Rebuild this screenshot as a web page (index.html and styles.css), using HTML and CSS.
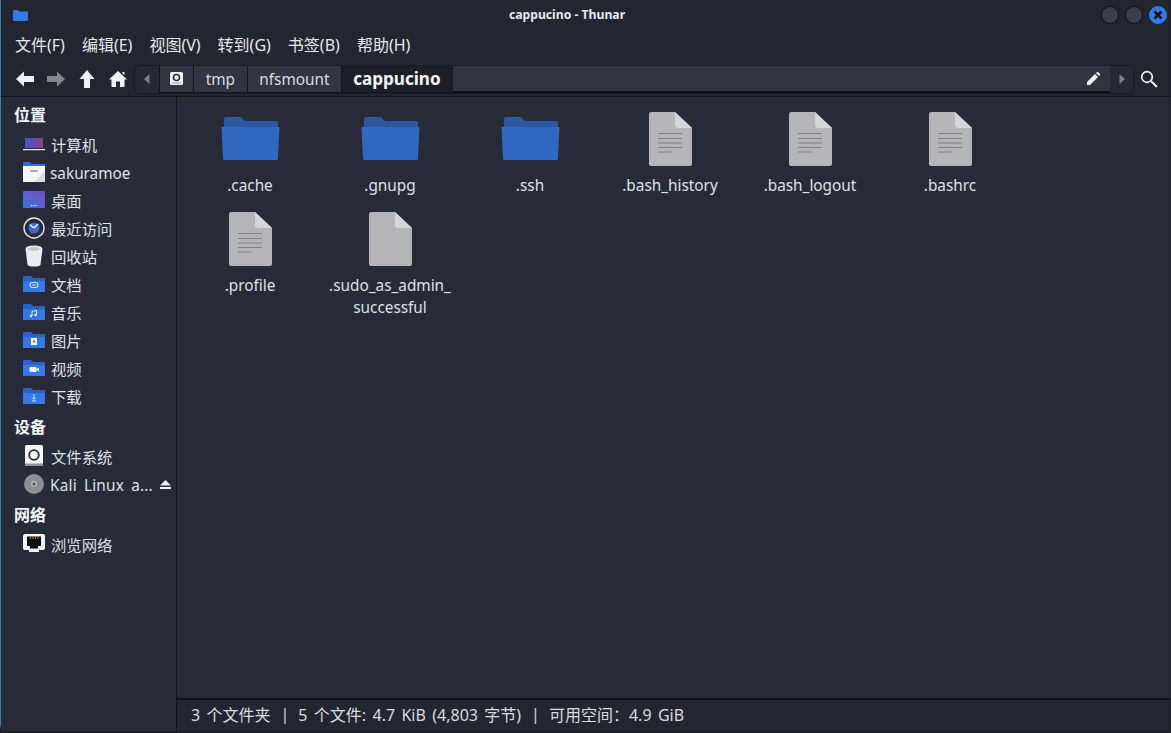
FILE: index.html
```html
<!DOCTYPE html>
<html lang="zh">
<head>
<meta charset="utf-8">
<title>cappucino - Thunar</title>
<link rel="stylesheet" href="styles.css">
</head>
<body>
<svg class="defs" width="0" height="0" aria-hidden="true">
  <defs>
    <linearGradient id="lap" x1="0" y1="0" x2="1" y2="0"><stop offset="0" stop-color="#3f56c8"/><stop offset="1" stop-color="#8a3f8c"/></linearGradient>
    <linearGradient id="desk" x1="0" y1="1" x2="1" y2="0"><stop offset="0" stop-color="#3b75e8"/><stop offset="1" stop-color="#7a4cb4"/></linearGradient>
    <symbol id="sf" viewBox="0 0 22 16"><path d="M0 1.200Q0 0 1.200 0H8L10 2H21Q22 2 22 3V15Q22 16 21 16H1Q0 16 0 15Z" fill="#2a62c8"/><path d="M0 5H22V15Q22 16 21 16H1Q0 16 0 15Z" fill="#3378e6"/></symbol>
    <symbol id="bigfolder" viewBox="0 0 64 64"><path d="M6 12Q6 10 8 10H22Q24 10 25 12L27 14H58Q60 14 60 16V30H6Z" fill="#2c589f"/><path d="M3.500 20H61.500L60 51.500Q60 53 58.500 53H6.500Q5 53 5 51.500Z" fill="#3067c0"/></symbol>
    <symbol id="doc" viewBox="0 0 64 64"><path d="M13 5H37L54 21V57Q54 59 52 59H13Q11 59 11 57V7Q11 5 13 5Z" fill="#b5b5b7"/><path d="M37 5L54 21H40Q37 21 37 18Z" fill="#d6d6d8"/></symbol>
  </defs>
</svg>
<div class="window">
  <header class="titlebar">
    <svg class="title-icon" width="15" height="11" viewBox="0 0 15 11"><path d="M0 1Q0 0 1 0H5L6.500 1.500H14Q15 1.500 15 2.500V10Q15 11 14 11H1Q0 11 0 10Z" fill="#2f79ea"/></svg>
    <span class="title">cappucino - Thunar</span>
    <div class="win-buttons">
      <span class="win-btn"></span>
      <span class="win-btn"></span>
      <span class="win-btn close"><svg width="10" height="10" viewBox="0 0 10 10"><path d="M1.500 1.500L8.500 8.500M8.500 1.500L1.500 8.500" stroke="#10131a" stroke-width="2.600" fill="none"/></svg></span>
    </div>
  </header>
  <nav class="menubar">
    <span class="menu">文件(F)</span><span class="menu">编辑(E)</span><span class="menu">视图(V)</span><span class="menu">转到(G)</span><span class="menu">书签(B)</span><span class="menu">帮助(H)</span>
  </nav>
  <div class="toolbar">
    <div class="nav-icons">
      <svg class="nav-icon" viewBox="0 0 20 16"><path d="M9 0.500V5H19V11H9V15.500L1 8Z" fill="#f1f2f3"/></svg>
      <svg class="nav-icon" viewBox="0 0 20 16"><path d="M11 0.500V5H1V11H11V15.500L19 8Z" fill="#85878b"/></svg>
      <svg class="nav-icon" viewBox="0 0 20 20"><path d="M10 1L17.500 10H13V19H7V10H2.500Z" fill="#f1f2f3"/></svg>
      <svg class="nav-icon" viewBox="0 0 20 20"><path d="M10 2L19 10.500H16.500V18H12V12.500H8V18H3.500V10.500H1ZM14.500 3H16.500V6L14.500 4.500Z" fill="#f1f2f3"/></svg>
    </div>
    <div class="pathbar">
      <span class="arrow-btn"><svg width="6" height="10" viewBox="0 0 6 10"><path d="M5.500 0V10L0 5Z" fill="#7c7f86"/></svg></span>
      <span class="crumb crumb-icon"><svg width="13" height="13" viewBox="0 0 13 13"><rect width="13" height="13" rx="1.500" fill="#f1f2f3"/><circle cx="6.500" cy="5.500" r="3" fill="none" stroke="#2b2e39" stroke-width="1.600"/><rect x="2" y="10.500" width="9" height="1" fill="#9a9ca2"/></svg></span>
      <span class="crumb crumb-tmp">tmp</span>
      <span class="crumb crumb-nfs">nfsmount</span>
      <span class="crumb crumb-active">cappucino</span>
      <span class="entry"><svg width="13" height="13" viewBox="0 0 13 13"><path d="M0 13V10L8 2L11 5L3 13ZM9 1L10 0H11L13 2V3L12 4Z" fill="#f1f2f3"/></svg></span>
      <span class="arrow-btn arrow-right"><svg width="6" height="10" viewBox="0 0 6 10"><path d="M0.500 0V10L6 5Z" fill="#7c7f86"/></svg></span>
    </div>
    <svg class="search" width="18" height="18" viewBox="0 0 18 18"><circle cx="7" cy="7" r="5.300" fill="none" stroke="#f1f2f3" stroke-width="1.700"/><path d="M11 11L17 17" stroke="#f1f2f3" stroke-width="2"/></svg>
  </div>
  <div class="body">
    <aside class="sidebar">
      <div class="heading">位置</div>
      <div class="row"><svg class="side-icon" viewBox="0 0 22 22"><rect x="2" y="5" width="18" height="10" fill="url(#lap)"/><rect y="16" width="22" height="1.200" fill="#f1f2f3"/></svg><span>计算机</span></div>
      <div class="row"><svg class="side-icon" viewBox="0 0 22 22"><path d="M0 2.500Q0 1 1.500 1H7L9 3H22V7H0Z" fill="#2f6fe0"/><path d="M0 5H22V21H0Z" fill="#f4f4f5"/><path d="M22 10V21H11Z" fill="#dcdde0"/><rect x="7" y="9" width="8" height="2" rx="1" fill="#a8a9ad"/></svg><span class="latin">sakuramoe</span></div>
      <div class="row"><svg class="side-icon" viewBox="0 0 22 22"><rect y="2" width="22" height="17" rx="1" fill="url(#desk)"/><path d="M8 16.500H14" stroke="#eef1f8" stroke-width="1" stroke-dasharray="1.200 1"/></svg><span>桌面</span></div>
      <div class="row"><svg class="side-icon" viewBox="0 0 22 22"><circle cx="11" cy="11" r="10" fill="#282b37" stroke="#e6e7ea" stroke-width="1.400"/><circle cx="11" cy="11" r="5.500" fill="#2f6fe0"/><path d="M7 7.500L11 11L15 7" stroke="#f1f2f3" stroke-width="1.400" fill="none"/><path d="M11 11L8.500 17" stroke="#c03048" stroke-width="1" fill="none"/></svg><span>最近访问</span></div>
      <div class="row"><svg class="side-icon" viewBox="0 0 22 22"><path d="M2.500 4Q2.500 0.500 11 0.500Q19.500 0.500 19.500 4L17.500 19.500Q17 21.500 11 21.500Q5 21.500 4.500 19.500Z" fill="#ebecee"/><ellipse cx="11" cy="3.800" rx="6" ry="2" fill="#c7c8cb"/></svg><span>回收站</span></div>
      <div class="row"><svg class="side-icon" viewBox="0 0 22 22"><use href="#sf" y="3" width="22" height="16"/><rect x="7" y="9.500" width="8" height="5" rx="2.500" fill="none" stroke="#cfe0fb" stroke-width="1.100"/><path d="M9 12H13" stroke="#cfe0fb" stroke-width="1"/></svg><span>文档</span></div>
      <div class="row"><svg class="side-icon" viewBox="0 0 22 22"><use href="#sf" y="3" width="22" height="16"/><path d="M9 10.500L13.500 9.500V14M9 10.500V15" stroke="#eef3fd" stroke-width="1" fill="none"/><circle cx="8" cy="15" r="1.200" fill="#eef3fd"/><circle cx="12.500" cy="14" r="1.200" fill="#eef3fd"/></svg><span>音乐</span></div>
      <div class="row"><svg class="side-icon" viewBox="0 0 22 22"><use href="#sf" y="3" width="22" height="16"/><rect x="8" y="9" width="6" height="7" fill="#f4f6fc"/><rect x="10" y="11.500" width="2" height="2" fill="#3378e6"/></svg><span>图片</span></div>
      <div class="row"><svg class="side-icon" viewBox="0 0 22 22"><use href="#sf" y="3" width="22" height="16"/><rect x="6.500" y="10" width="7" height="5" rx="1" fill="#f4f6fc"/><path d="M13.500 12L16 10.500V14.500L13.500 13Z" fill="#f4f6fc"/></svg><span>视频</span></div>
      <div class="row"><svg class="side-icon" viewBox="0 0 22 22"><use href="#sf" y="3" width="22" height="16"/><path d="M11 9V14M9 12.500L11 14.500L13 12.500M9 16H13" stroke="#dbe7fb" stroke-width="1" fill="none"/></svg><span>下载</span></div>
      <div class="heading">设备</div>
      <div class="row"><svg class="side-icon" viewBox="0 0 22 22"><rect x="2" y="0" width="18" height="21" rx="1.500" fill="#f4f4f5"/><circle cx="11" cy="10" r="4.800" fill="none" stroke="#24262e" stroke-width="1.800"/><rect x="2" y="18.500" width="18" height="2.500" fill="#8f9196"/></svg><span>文件系统</span></div>
      <div class="row"><svg class="side-icon" viewBox="0 0 22 22"><circle cx="11" cy="11" r="10" fill="#8d8e92"/><circle cx="11" cy="11" r="3" fill="#b9babd"/><circle cx="11" cy="11" r="1.600" fill="#55565c"/></svg><span class="latin truncate">Kali Linux a...</span><svg class="eject" width="11" height="9" viewBox="0 0 11 9"><path d="M5.500 0L11 5.500H0Z M0 7H11V9H0Z" fill="#f1f2f3"/></svg></div>
      <div class="heading">网络</div>
      <div class="row"><svg class="side-icon" viewBox="0 0 22 22"><path d="M2 1H20Q22 1 22 3V15Q22 17 20 17H16V19H6V17H2Q0 17 0 15V3Q0 1 2 1Z" fill="#f4f4f5"/><path d="M4 3.500H18V13H15V15.500H7V13H4Z" fill="#0c0d11"/><path d="M7.500 3.500V6M10 3.500V6M12.500 3.500V6M15 3.500V6" stroke="#a88a4a" stroke-width="1"/></svg><span>浏览网络</span></div>
    </aside>
    <main class="content">
      <div class="files">
        <div class="file"><svg class="file-icon"><use href="#bigfolder"/></svg><span class="name">.cache</span></div>
        <div class="file"><svg class="file-icon"><use href="#bigfolder"/></svg><span class="name">.gnupg</span></div>
        <div class="file"><svg class="file-icon"><use href="#bigfolder"/></svg><span class="name">.ssh</span></div>
        <div class="file"><svg class="file-icon" viewBox="0 0 64 64"><use href="#doc" width="64" height="64"/><path class="doc-lines" d="M20 26.500H44M20 31.500H44M20 36H44M20 40.500H44M20 45H34"/></svg><span class="name">.bash_history</span></div>
        <div class="file"><svg class="file-icon" viewBox="0 0 64 64"><use href="#doc" width="64" height="64"/><path class="doc-lines" d="M20 26.500H44M20 31.500H44M20 36H44M20 40.500H44M20 45H34"/></svg><span class="name">.bash_logout</span></div>
        <div class="file"><svg class="file-icon" viewBox="0 0 64 64"><use href="#doc" width="64" height="64"/><path class="doc-lines" d="M20 26.500H44M20 31.500H44M20 36H44M20 40.500H44M20 45H34"/></svg><span class="name">.bashrc</span></div>
        <div class="file"><svg class="file-icon" viewBox="0 0 64 64"><use href="#doc" width="64" height="64"/><path class="doc-lines" d="M20 26.500H44M20 31.500H44M20 36H44M20 40.500H44M20 45H34"/></svg><span class="name">.profile</span></div>
        <div class="file"><svg class="file-icon" viewBox="0 0 64 64"><use href="#doc" width="64" height="64"/></svg><span class="name">.sudo_as_admin_<br>successful</span></div>
      </div>
      <footer class="status"><span>3 个文件夹</span><span class="sep">|</span><span>5 个文件: 4.7 KiB (4,803 字节)</span><span class="sep">|</span><span>可用空间：4.9 GiB</span></footer>
    </main>
  </div>
</div>
</body>
</html>
```

FILE: styles.css
```css
* { box-sizing: border-box; }
html, body { margin: 0; height: 100%; background: #1e2028; overflow: hidden; }
.defs { position: absolute; }
body, .window {
  font-family: "Noto Sans", "Noto Sans CJK SC", sans-serif;
  font-size: 15.33px;
  color: #e6e7ea;
}
.window {
  width: 1170px;
  height: 731px;
  display: flex;
  flex-direction: column;
  background: #23262f;
  border-left: 1px solid #2f7fb8;
  border-bottom-left-radius: 6px;
}
.titlebar {
  height: 29px;
  flex: none;
  display: flex;
  align-items: center;
  padding: 1px 3px 0 12px;
}
.title {
  flex: 1;
  padding: 0 0 2px 5px;
  text-align: center;
  font-size: 12.2px;
  font-weight: 700;
  color: #e8e9ec;
}
.win-buttons { display: flex; gap: 6px; }
.win-btn {
  width: 18px;
  height: 18px;
  border-radius: 50%;
  background: #3b3f4d;
  border: 1px solid #0e1016;
  display: flex;
  align-items: center;
  justify-content: center;
}
.close { background: #2f79ea; border-color: #2f79ea; }
.menubar { height: 30px; flex: none; display: flex; align-items: center; padding-left: 14px; gap: 17px; font-size: 16px; }
.menu { white-space: nowrap; padding-bottom: 1px; }
.toolbar { height: 38px; flex: none; display: flex; align-items: center; padding: 3px 12px 0 14px; border-bottom: 1px solid #14161c; }
.nav-icons { display: flex; width: 119px; gap: 11px; align-items: center; }
.nav-icon { width: 20px; height: 20px; flex: none; }
.pathbar {
  width: 1001px;
  height: 29px;
  display: flex;
  border: 1px solid #1a1c23;
  border-radius: 5px;
  background: #262932;
}
.arrow-btn { width: 24px; flex: none; display: flex; align-items: center; justify-content: center; }
.arrow-right { width: 23px; }
.crumb {
  display: flex;
  align-items: center;
  justify-content: center;
  background: #323541;
  border-left: 1px solid #14161c;
  border-bottom: 1px solid #14161c;
  color: #d9dade;
}
.crumb-icon { width: 34px; }
.crumb-tmp { width: 54px; }
.crumb-nfs { width: 94px; }
.crumb-active { width: 112px; background: #1d1f27; font-weight: 700; font-size: 17.1px; color: #f5f6f7; border-right: 1px solid #14161c; }
.entry {
  flex: 1;
  background: #323541;
  border-bottom: 2px solid #0e1016;
  display: flex;
  align-items: center;
  justify-content: flex-end;
  padding-right: 10px;
}
.search { margin-left: 6px; flex: none; }
.body { flex: 1; display: flex; min-height: 0; }
.sidebar {
  width: 176px;
  flex: none;
  background: #282b37;
  border-right: 1px solid #14161c;
  padding-top: 1px;
}
.heading { height: 32px; display: flex; align-items: center; padding: 0 0 1px 13px; font-weight: 700; font-size: 16px; color: #f4f5f6; }
.row { height: 28px; display: flex; align-items: center; padding-left: 22px; white-space: nowrap; color: #dfe0e4; }
.row span { padding-left: 1px; }
.row .latin { padding: 2px 0 0; }
.side-icon { width: 22px; height: 22px; flex: none; margin-right: 5px; }
.truncate { width: 110px; flex: none; word-spacing: 3px; letter-spacing: 0.2px; }
.eject { flex: none; }
.content { flex: 1; display: flex; flex-direction: column; background: #282b37; min-width: 0; }
.files {
  flex: 1;
  display: grid;
  grid-template-columns: repeat(6, 140px);
  grid-auto-rows: 100px;
  padding: 10px 0 0 3px;
}
.file { display: flex; flex-direction: column; align-items: center; }
.file-icon { width: 64px; height: 64px; flex: none; }
.name { margin-top: 3px; line-height: 22px; text-align: center; white-space: nowrap; color: #dfe0e4; }
.doc-lines { stroke: #84858a; stroke-width: 1; fill: none; }
.status {
  height: 33px;
  flex: none;
  background: #23262f;
  border-top: 2px solid #0e1117;
  display: flex;
  align-items: center;
  padding: 0 0 4px 14px;
  font-size: 16px;
  word-spacing: 2.2px;
  color: #d9dade;
  white-space: pre;
}
.sep { margin: 0 9px 0 10px; }
```
